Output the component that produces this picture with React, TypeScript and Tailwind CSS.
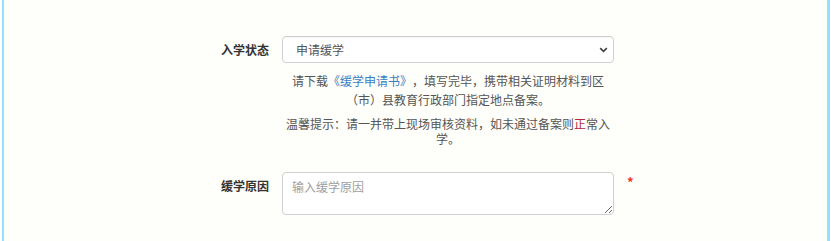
import React from "react";

const font = {
  fontFamily: '"Noto Sans CJK SC", "Noto Sans", sans-serif',
};

function Chevron() {
  return (
    <svg
      className="pointer-events-none absolute right-[6px] top-1/2 -translate-y-1/2"
      width="9"
      height="6"
      viewBox="0 0 9 6"
      fill="none"
    >
      <path d="M1.2 1.2 4.5 4.4 7.8 1.2" stroke="#444" strokeWidth="1.7" />
    </svg>
  );
}

export default function App() {
  return (
    <div style={font} className="h-[241px] bg-[#fefefa] [text-spacing-trim:space-all]">
      <div className="ml-[2px] mr-[1px] h-full border-l-[2px] border-r-[3px] border-[#8ee3fb] pl-[194px]">
        {/* 入学状态 */}
        <div className="flex items-start pt-[36px]">
          <label className="w-[71px] text-right text-[12px] font-bold leading-[27px] text-[#333]">
            入学状态
          </label>
          <div className="ml-[13px] w-[332px]">
            <div className="relative">
              <select
                defaultValue="apply"
                className="block h-[27px] w-full appearance-none rounded-[4px] border border-[#d0d0d0] bg-white pl-[13px] pr-6 text-[12px] text-[#555] shadow-[inset_0_1px_1px_rgba(0,0,0,0.04)] outline-none"
              >
                <option value="apply">申请缓学</option>
                <option value="normal">正常入学</option>
              </select>
              <Chevron />
            </div>
            <p className="mt-[8px] text-center text-[12px] leading-[19px] text-[#555]">
              请下载<a className="text-[#3a7fc1]">《缓学申请书》</a>，填写完毕，携带相关证明材料到区（市）县教育行政部门指定地点备案。
            </p>
            <p className="mt-[7px] text-center text-[12px] leading-[15px] text-[#555]">
              温馨提示：请一并带上现场审核资料，如未通过备案则
              <span className="text-[#b4283a]">正</span>常入学。
            </p>
          </div>
        </div>

        {/* 缓学原因 */}
        <div className="mt-[26px] flex items-start">
          <label className="w-[71px] pt-[5px] text-right text-[12px] font-bold leading-[18px] text-[#333]">
            缓学原因
          </label>
          <textarea
            placeholder="输入缓学原因"
            className="ml-[13px] block h-[43px] w-[332px] rounded-[4px] border border-[#d0d0d0] bg-white px-[9px] py-[5px] text-[12px] leading-[18px] text-[#555] placeholder:text-[#a0a0a0] outline-none"
          />
          <span className="ml-[13px] mt-[1px] text-[13px] font-bold leading-[18px] text-[#f5321e]">
            *
          </span>
        </div>
      </div>
    </div>
  );
}
